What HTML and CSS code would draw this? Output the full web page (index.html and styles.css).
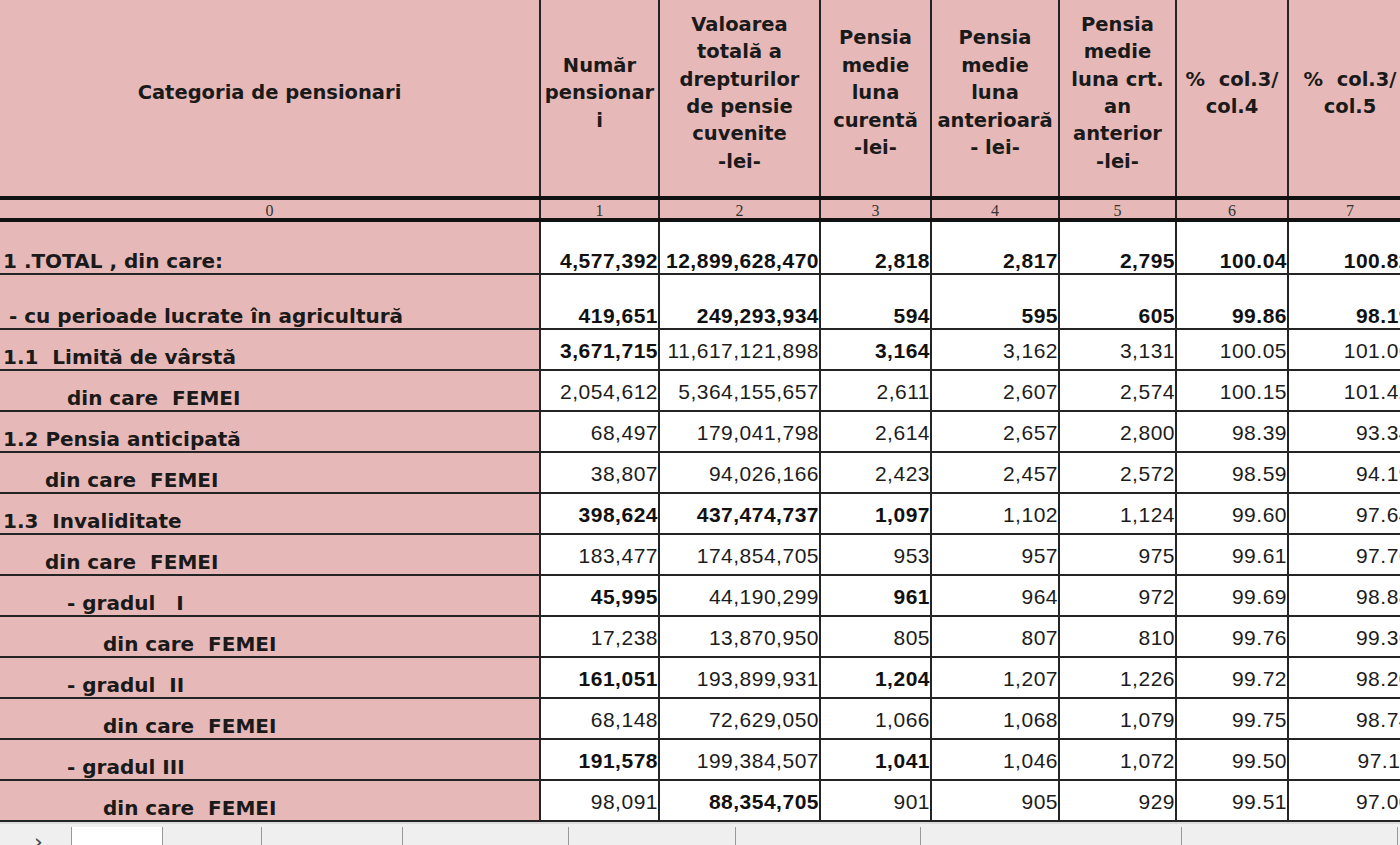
FILE: index.html
```html
<!DOCTYPE html>
<html lang="ro">
<head>
<meta charset="utf-8">
<title>Categoria de pensionari</title>
<link rel="stylesheet" href="styles.css">
</head>
<body>
<div class="sheet">
  <table class="grid">
    <colgroup>
      <col class="c0"><col class="c1"><col class="c2"><col class="c3"><col class="c4"><col class="c5"><col class="c6"><col class="c7">
    </colgroup>
    <thead>
      <tr class="hrow">
        <th class="first">Categoria de pensionari</th>
        <th>Număr<br>pensionar<br>i</th>
        <th>Valoarea<br>totală a<br>drepturilor<br>de pensie<br>cuvenite<br>-lei-</th>
        <th>Pensia<br>medie<br>luna<br>curentă<br>-lei-</th>
        <th>Pensia<br>medie<br>luna<br>anterioară<br>- lei-</th>
        <th>Pensia<br>medie<br>luna crt.<br>an<br>anterior<br>-lei-</th>
        <th>%&nbsp; col.3/<br>col.4</th>
        <th>%&nbsp; col.3/<br>col.5</th>
      </tr>
      <tr class="nrow">
        <th class="first">0</th><th>1</th><th>2</th><th>3</th><th>4</th><th>5</th><th>6</th><th>7</th>
      </tr>
    </thead>
    <tbody>
      <tr class="r-total">
        <td class="lbl">1 .TOTAL , din care:</td>
        <td class="b">4,577,392</td><td class="b">12,899,628,470</td><td class="b">2,818</td><td class="b">2,817</td><td class="b">2,795</td><td class="b">100.04</td><td class="b">100.82</td>
      </tr>
      <tr class="r-agri">
        <td class="lbl ind-a">- cu perioade lucrate în agricultură</td>
        <td class="b">419,651</td><td class="b">249,293,934</td><td class="b">594</td><td class="b">595</td><td class="b">605</td><td class="b">99.86</td><td class="b">98.19</td>
      </tr>
      <tr class="r">
        <td class="lbl">1.1&nbsp; Limită de vârstă</td>
        <td class="b">3,671,715</td><td>11,617,121,898</td><td class="b">3,164</td><td>3,162</td><td>3,131</td><td>100.05</td><td>101.06</td>
      </tr>
      <tr class="r">
        <td class="lbl ind-3">din care&nbsp; FEMEI</td>
        <td>2,054,612</td><td>5,364,155,657</td><td>2,611</td><td>2,607</td><td>2,574</td><td>100.15</td><td>101.42</td>
      </tr>
      <tr class="r">
        <td class="lbl">1.2 Pensia anticipată</td>
        <td>68,497</td><td>179,041,798</td><td>2,614</td><td>2,657</td><td>2,800</td><td>98.39</td><td>93.34</td>
      </tr>
      <tr class="r">
        <td class="lbl ind-2">din care&nbsp; FEMEI</td>
        <td>38,807</td><td>94,026,166</td><td>2,423</td><td>2,457</td><td>2,572</td><td>98.59</td><td>94.19</td>
      </tr>
      <tr class="r">
        <td class="lbl">1.3&nbsp; Invaliditate</td>
        <td class="b">398,624</td><td class="b">437,474,737</td><td class="b">1,097</td><td>1,102</td><td>1,124</td><td>99.60</td><td>97.64</td>
      </tr>
      <tr class="r">
        <td class="lbl ind-2">din care&nbsp; FEMEI</td>
        <td>183,477</td><td>174,854,705</td><td>953</td><td>957</td><td>975</td><td>99.61</td><td>97.76</td>
      </tr>
      <tr class="r">
        <td class="lbl ind-3">- gradul&nbsp;&nbsp; I</td>
        <td class="b">45,995</td><td>44,190,299</td><td class="b">961</td><td>964</td><td>972</td><td>99.69</td><td>98.88</td>
      </tr>
      <tr class="r">
        <td class="lbl ind-4">din care&nbsp; FEMEI</td>
        <td>17,238</td><td>13,870,950</td><td>805</td><td>807</td><td>810</td><td>99.76</td><td>99.36</td>
      </tr>
      <tr class="r">
        <td class="lbl ind-3">- gradul&nbsp; II</td>
        <td class="b">161,051</td><td>193,899,931</td><td class="b">1,204</td><td>1,207</td><td>1,226</td><td>99.72</td><td>98.20</td>
      </tr>
      <tr class="r">
        <td class="lbl ind-4">din care&nbsp; FEMEI</td>
        <td>68,148</td><td>72,629,050</td><td>1,066</td><td>1,068</td><td>1,079</td><td>99.75</td><td>98.74</td>
      </tr>
      <tr class="r">
        <td class="lbl ind-3">- gradul III</td>
        <td class="b">191,578</td><td>199,384,507</td><td class="b">1,041</td><td>1,046</td><td>1,072</td><td>99.50</td><td>97.11</td>
      </tr>
      <tr class="r">
        <td class="lbl ind-4">din care&nbsp; FEMEI</td>
        <td>98,091</td><td class="b">88,354,705</td><td>901</td><td>905</td><td>929</td><td>99.51</td><td>97.00</td>
      </tr>
    </tbody>
  </table>
  <div class="tabs">
    <div class="tab nav">›</div>
    <div class="tab active"></div>
    <div class="tab w99"></div>
    <div class="tab w141"></div>
    <div class="tab w166"></div>
    <div class="tab w167"></div>
    <div class="tab w185"></div>
    <div class="tab w261"></div>
    <div class="tab w216"></div>
    <div class="tab rest"></div>
  </div>
</div>
</body>
</html>
```

FILE: styles.css
```css
html, body {
  margin: 0;
  padding: 0;
}

body {
  width: 1400px;
  height: 845px;
  overflow: hidden;
  background: #f1f1f1;
  color: #161616;
  font-family: "DejaVu Sans", "Noto Sans", sans-serif;
}

.sheet {
  display: flex;
  flex-direction: column;
  width: 1400px;
  height: 845px;
  overflow: hidden;
}

.grid {
  flex: none;
  width: 1412px;
  border-collapse: collapse;
  table-layout: fixed;
  background: #ffffff;
}

.c0 { width: 540px; }
.c1 { width: 119px; }
.c2 { width: 161px; }
.c3 { width: 111px; }
.c4 { width: 128px; }
.c5 { width: 117px; }
.c6 { width: 112px; }
.c7 { width: 124px; }

.grid th,
.grid td {
  border: 2px solid #242424;
  padding: 0;
  overflow: hidden;
  white-space: nowrap;
}

.grid .first,
.grid .lbl {
  border-left: none;
}

/* header */
.hrow {
  height: 198px;
}

.hrow th {
  border-top: none;
  border-bottom: 4px solid #111111;
  background: #e6b8b7;
  font-family: "DejaVu Sans", sans-serif;
  font-weight: 700;
  font-size: 19.5px;
  line-height: 27.4px;
  text-align: center;
  vertical-align: middle;
  padding-bottom: 10px;
  color: #1a1a1a;
}

.nrow {
  height: 22px;
}

.nrow th {
  border-top: 4px solid #111111;
  border-bottom: 4px solid #111111;
  background: #e6b8b7;
  font-family: "Liberation Serif", serif;
  font-weight: 400;
  font-size: 16px;
  line-height: 15px;
  text-align: center;
  vertical-align: bottom;
  color: #333333;
}

/* body rows */
.r-total { height: 54px; }
.r-agri { height: 55px; }
.r { height: 41px; }

.grid td {
  font-family: "Liberation Sans", Arial, sans-serif;
  font-size: 21px;
  letter-spacing: 0.5px;
  line-height: 24px;
  text-align: right;
  vertical-align: middle;
  padding-top: 3px;
  color: #1c1c1c;
}

.r-total td,
.r-agri td {
  vertical-align: bottom;
  padding-top: 0;
}

.grid td.b {
  font-weight: 700;
  color: #111111;
}

.grid td.lbl {
  background: #e6b8b7;
  font-family: "DejaVu Sans", sans-serif;
  font-weight: 700;
  font-size: 20px;
  letter-spacing: 0;
  line-height: 24px;
  text-align: left;
  vertical-align: bottom;
  padding: 0 0 0 3px;
  color: #1a1a1a;
}

.r-total td.lbl { padding-bottom: 0; }
.r-agri td.lbl { padding-bottom: 0; }

.grid td.ind-a { padding-left: 9px; }
.grid td.ind-2 { padding-left: 45px; }
.grid td.ind-3 { padding-left: 67px; }
.grid td.ind-4 { padding-left: 103px; }

/* sheet tab strip */
.tabs {
  flex: 1;
  display: flex;
  align-items: stretch;
  background: #efefef;
  border-top: 2px solid #dcdcdc;
}

.tab {
  flex: none;
  margin-top: 3px;
  border-left: 1px solid #9a9a9a;
  box-sizing: border-box;
}

.tab.nav {
  width: 71px;
  border-left: none;
  color: #444444;
  font-family: "DejaVu Sans", sans-serif;
  font-size: 22px;
  line-height: 30px;
  padding-left: 34px;
}

.tab.active {
  width: 91px;
  background: #ffffff;
}

.w99 { width: 99px; }
.w141 { width: 141px; }
.w166 { width: 166px; }
.w167 { width: 167px; }
.w185 { width: 185px; }
.w261 { width: 261px; }
.w216 { width: 216px; }
.tab.rest { flex: 1; }
```
